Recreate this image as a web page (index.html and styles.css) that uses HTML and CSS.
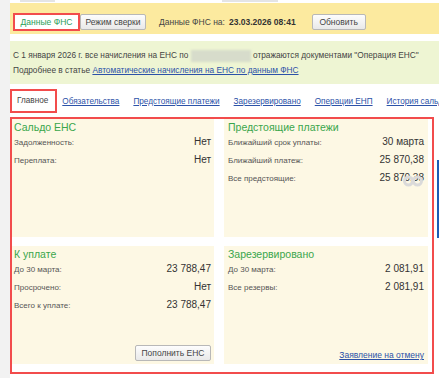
FILE: index.html
```html
<!DOCTYPE html>
<html>
	<head>
		<title>ЕНС</title>
		<link rel="stylesheet" href="styles.css">
	</head>
	<body>
		<div class="page">
			<div class="top-strip">
				<span class="frag frag-a"></span>
				<span class="frag frag-b"></span>
			</div>
			<div class="toolbar">
				<div class="btn btn-active">Данные ФНС</div>
				<div class="btn btn-mode">Режим сверки</div>
				<span class="fns-label">Данные ФНС на:</span>
				<span class="fns-date">23.03.2026 08:41</span>
				<div class="btn btn-refresh">Обновить</div>
			</div>
			<div class="info">
				<div class="info-line">С 1 января 2026 г. все начисления на ЕНС по <span class="hidden-name"></span> отражаются документами "Операция ЕНС"</div>
				<div class="info-line">Подробнее в статье <a class="link" href="#">Автоматические начисления на ЕНС по данным ФНС</a></div>
			</div>
			<div class="tabs">
				<span class="tab tab-active">Главное</span>
				<a class="tab link" href="#">Обязательства</a>
				<a class="tab link" href="#">Предстоящие платежи</a>
				<a class="tab link" href="#">Зарезервировано</a>
				<a class="tab link" href="#">Операции ЕНП</a>
				<a class="tab link" href="#">История сальдо</a>
			</div>
			<div class="frame">
				<div class="panel">
					<div class="panel-title">Сальдо ЕНС</div>
					<div class="row"><span class="label">Задолженность:</span><span class="value">Нет</span></div>
					<div class="row"><span class="label">Переплата:</span><span class="value">Нет</span></div>
				</div>
				<div class="panel panel-mark">
					<div class="panel-title">Предстоящие платежи</div>
					<div class="row"><span class="label">Ближайший срок уплаты:</span><span class="value">30 марта</span></div>
					<div class="row"><span class="label">Ближайший платеж:</span><span class="value">25 870,38</span></div>
					<div class="row"><span class="label">Все предстоящие:</span><span class="value">25 870,38</span></div>
					<svg class="watermark" width="20" height="17" viewBox="0 0 20 17">
						<circle cx="5.5" cy="8" r="4" fill="none" stroke="#dadada" stroke-width="3"/>
						<circle cx="14.5" cy="8" r="4" fill="none" stroke="#dadada" stroke-width="3"/>
					</svg>
				</div>
				<div class="panel">
					<div class="panel-title">К уплате</div>
					<div class="row"><span class="label">До 30 марта:</span><span class="value">23 788,47</span></div>
					<div class="row"><span class="label">Просрочено:</span><span class="value">Нет</span></div>
					<div class="row"><span class="label">Всего к уплате:</span><span class="value">23 788,47</span></div>
					<div class="btn btn-pay">Пополнить ЕНС</div>
				</div>
				<div class="panel">
					<div class="panel-title">Зарезервировано</div>
					<div class="row"><span class="label">До 30 марта:</span><span class="value">2 081,91</span></div>
					<div class="row"><span class="label">Все резервы:</span><span class="value">2 081,91</span></div>
					<a class="link cancel-link" href="#">Заявление на отмену</a>
				</div>
			</div>
			<div class="edge-bar"></div>
		</div>
	</body>
</html>
```

FILE: styles.css
```css
body{
	margin: 0;
	background: #fff;
	font-family: "Liberation Sans", Arial, sans-serif;
	color: #333;
}
.page{
	position: relative;
	min-height: 378px;
	border-left: 10px solid #f2f2f2;
	box-sizing: border-box;
}
.top-strip{
	display: flex;
	height: 3px;
}
.frag{
	display: block;
	height: 2px;
	background: #e4e4e4;
}
.frag-a{
	margin-left: 10px;
	width: 35px;
}
.frag-b{
	margin-left: 167px;
	width: 56px;
}
.toolbar{
	display: flex;
	align-items: center;
	height: 31px;
	padding: 6px 0 0 3px;
	box-sizing: border-box;
	background: #fcea9f;
	font-size: 8.5px;
	white-space: nowrap;
}
.btn{
	height: 16px;
	line-height: 14px;
	padding: 0;
	box-sizing: border-box;
	border: 1px solid #b8b8b8;
	border-radius: 2px;
	background: linear-gradient(#fdfdfd, #e9e9e9);
	color: #444;
	font-size: 8.5px;
	text-align: center;
	white-space: nowrap;
}
.btn-active{
	width: 67px;
	height: 18px;
	line-height: 14px;
	border: 2px solid #f24c4c;
	border-radius: 0;
	background: #fff;
	color: #2aa05a;
}
.btn-mode{
	width: 66px;
}
.fns-label{
	margin-left: 13px;
	color: #444;
}
.fns-date{
	margin-left: 4px;
	font-weight: bold;
	color: #333;
}
.btn-refresh{
	margin-left: 16px;
	width: 54px;
}
.info{
	margin-top: 7px;
	height: 43px;
	padding: 7px 3px 0 3px;
	box-sizing: border-box;
	background: #eef5d3;
	font-size: 8.3px;
	color: #444;
}
.info-line{
	line-height: 15px;
	white-space: nowrap;
}
.hidden-name{
	display: inline-block;
	width: 60px;
	height: 12px;
	vertical-align: middle;
	background: #d7dccb;
	filter: blur(1.2px);
}
.link{
	color: #2c52a8;
	text-decoration: underline;
}
.tabs{
	display: flex;
	align-items: center;
	margin-top: 5px;
	height: 24px;
	white-space: nowrap;
	overflow: hidden;
	font-size: 8.2px;
}
.tab{
	margin-right: 14px;
}
.tab-active{
	height: 24px;
	line-height: 20px;
	padding: 0 7px 0 5px;
	margin-right: 5px;
	box-sizing: border-box;
	border: 2px solid #f24c4c;
	color: #444;
}
.frame{
	display: grid;
	grid-template-columns: 202px 204px;
	grid-template-rows: 118px 118px;
	column-gap: 10px;
	row-gap: 9px;
	width: 424px;
	margin-top: 4px;
	padding: 0 4px 8px 0;
	box-sizing: border-box;
	border: 2px solid #f24c4c;
	background: #fff;
}
.panel{
	display: flex;
	flex-direction: column;
	padding: 2px 3px 3px 2px;
	background: #fdf8e4;
}
.panel:nth-child(even){
	padding-left: 4px;
	padding-right: 4px;
}
.panel-mark{
	position: relative;
}
.panel-title{
	height: 12px;
	line-height: 12px;
	font-size: 10.5px;
	color: #3aa64c;
}
.row{
	display: flex;
	justify-content: space-between;
	align-items: baseline;
	height: 18px;
	line-height: 18px;
}
.label{
	font-size: 8px;
	color: #555;
}
.value{
	font-size: 10px;
	color: #333;
}
.btn-pay{
	align-self: flex-end;
	margin-top: auto;
	width: 76px;
}
.cancel-link{
	align-self: flex-end;
	margin-top: auto;
	margin-bottom: 1px;
	font-size: 8.5px;
}
.watermark{
	position: absolute;
	top: 54px;
	right: 5px;
}
.edge-bar{
	position: absolute;
	top: 160px;
	right: 0;
	width: 2px;
	height: 78px;
	background: #1c5db5;
}
```
